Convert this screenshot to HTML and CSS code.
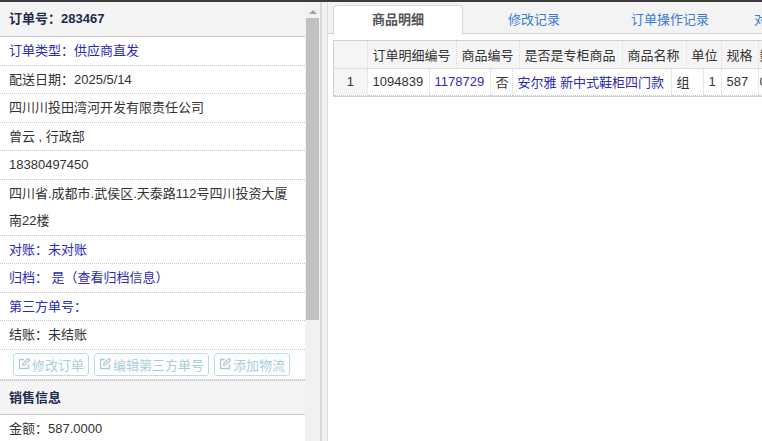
FILE: index.html
```html
<!DOCTYPE html>
<html lang="zh-CN">
<head>
<meta charset="utf-8">
<title>订单详情</title>
<link rel="stylesheet" href="styles.css">
</head>
<body>
<div class="topbar"></div>
<div class="main">
  <aside class="left">
    <div class="sec-head">订单号：283467</div>
    <div class="row blue">订单类型：供应商直发</div>
    <div class="row">配送日期：2025/5/14</div>
    <div class="row">四川川投田湾河开发有限责任公司</div>
    <div class="row">曾云 , 行政部</div>
    <div class="row">18380497450</div>
    <div class="row">四川省.成都市.武侯区.天泰路112号四川投资大厦<br>南22楼</div>
    <div class="row blue">对账：未对账</div>
    <div class="row blue">归档： 是（查看归档信息）</div>
    <div class="row blue">第三方单号：</div>
    <div class="row">结账：未结账</div>
    <div class="row btns">
      <span class="btn"><svg class="ico" viewBox="0 0 14 14"><path d="M7 2.5H2.5v9h9V7" fill="none" stroke="currentColor" stroke-width="1.3"/><path d="M5.5 8.5l.4-2L11 1.4l1.6 1.6-5.1 5.1z" fill="none" stroke="currentColor" stroke-width="1.2" stroke-linejoin="round"/></svg>修改订单</span>
      <span class="btn"><svg class="ico" viewBox="0 0 14 14"><path d="M7 2.5H2.5v9h9V7" fill="none" stroke="currentColor" stroke-width="1.3"/><path d="M5.5 8.5l.4-2L11 1.4l1.6 1.6-5.1 5.1z" fill="none" stroke="currentColor" stroke-width="1.2" stroke-linejoin="round"/></svg>编辑第三方单号</span>
      <span class="btn"><svg class="ico" viewBox="0 0 14 14"><path d="M7 2.5H2.5v9h9V7" fill="none" stroke="currentColor" stroke-width="1.3"/><path d="M5.5 8.5l.4-2L11 1.4l1.6 1.6-5.1 5.1z" fill="none" stroke="currentColor" stroke-width="1.2" stroke-linejoin="round"/></svg>添加物流</span>
    </div>
    <div class="sec-head sec-mid">销售信息</div>
    <div class="row">金额：587.0000</div>
  </aside>
  <div class="vscroll">
    <div class="arrow"></div>
    <div class="thumb"></div>
  </div>
  <div class="divider"></div>
  <section class="right">
    <nav class="tabs">
      <span class="tab active">商品明细</span>
      <span class="tab">修改记录</span>
      <span class="tab">订单操作记录</span>
      <span class="tab">对账结算操作记录</span>
    </nav>
    <div class="grid">
      <table class="ghead">
        <colgroup><col style="width:33px"><col style="width:89px"><col style="width:63px"><col style="width:103px"><col style="width:64px"><col style="width:35px"><col style="width:37px"><col style="width:60px"></colgroup>
        <tr><th class="rn"></th><th>订单明细编号</th><th>商品编号</th><th>是否是专柜商品</th><th>商品名称</th><th>单位</th><th>规格</th><th class="edge">数量</th></tr>
      </table>
      <table class="gbody">
        <colgroup><col style="width:33px"><col style="width:62px"><col style="width:61px"><col style="width:22px"><col style="width:159px"><col style="width:32px"><col style="width:18px"><col style="width:37px"><col style="width:60px"></colgroup>
        <tr><td class="rn">1</td><td>1094839</td><td class="blue">1178729</td><td>否</td><td class="blue">安尔雅 新中式鞋柜四门款</td><td>组</td><td class="num">1</td><td>587</td><td class="edge">0.00</td></tr>
      </table>
    </div>
  </section>
</div>
</body>
</html>
```
FILE: styles.css
```css
* { box-sizing: border-box; }
html, body { margin: 0; padding: 0; }
body {
  width: 762px;
  height: 441px;
  overflow: hidden;
  background: #fff;
  font-family: "Liberation Sans", "Noto Sans CJK SC", sans-serif;
  font-size: 13px;
  color: #333;
}
.topbar { height: 2px; background: #3c3c3c; }
.main { display: flex; height: 439px; }

.left { width: 305px; flex: none; overflow: hidden; background: #fff; }
.sec-head {
  height: 35px;
  line-height: 34px;
  padding-left: 9px;
  background: #f4f4f4;
  border-bottom: 1px solid #c8c8c8;
  font-weight: bold;
  color: #1f2c4f;
}
.sec-mid { border-top: 1px solid #d6d6d6; height: 35px; line-height: 33px; }
.row {
  line-height: 27.5px;
  padding-left: 9px;
  border-bottom: 1px dotted #c4c4c4;
  white-space: nowrap;
}
.blue { color: #2b2bb8; }
.btns {
  display: flex;
  gap: 5px;
  height: 30px;
  padding: 3px 0 0 13px;
  line-height: normal;
}
.btn {
  display: inline-flex;
  align-items: center;
  height: 23px;
  padding: 0 4px 0 3px;
  border: 1px solid #bcdde3;
  border-radius: 3px;
  color: #a7ced8;
}
.ico { width: 14px; height: 14px; margin-right: 1px; }

.vscroll {
  width: 15px;
  flex: none;
  background: #f1f1f1;
  display: flex;
  flex-direction: column;
  align-items: center;
}
.arrow {
  margin-top: 8px;
  width: 0; height: 0;
  border-left: 4px solid transparent;
  border-right: 4px solid transparent;
  border-bottom: 4px solid #a3a3a3;
}
.thumb {
  margin-top: 4px;
  width: 13px;
  height: 302px;
  background: #c1c1c1;
}
.divider {
  width: 7px;
  flex: none;
  background: #f1f1f1;
  border-left: 2px solid #dadada;
}
.right {
  flex: 1;
  min-width: 0;
  overflow: hidden;
  background: #fff;
  border-left: 1px solid #dcdcdc;
}
.tabs {
  display: flex;
  height: 32px;
  padding: 3px 0 0 5px;
  background: #f3f3f3;
  border-bottom: 1px solid #d6d6d6;
  border-top-left-radius: 4px;
  white-space: nowrap;
}
.tab {
  flex: none;
  width: 130px;
  margin-right: 6px;
  height: 29px;
  line-height: 27px;
  text-align: center;
  color: #3a7bd5;
  border: 1px solid transparent;
  border-bottom: 0;
}
.tab.active {
  background: #fff;
  color: #555;
  font-weight: bold;
  border-color: #d6d6d6;
  border-radius: 4px 4px 0 0;
  height: 30px;
}
.grid {
  margin: 6px 0 0 5px;
  width: 486px;
  border: 1px solid #d0d0d0;
  border-right: 0;
}
.grid table {
  border-collapse: collapse;
  table-layout: fixed;
  width: 484px;
}
.grid th, .grid td {
  padding: 0 5px;
  white-space: nowrap;
  overflow: hidden;
  text-align: left;
  font-weight: normal;
}
.ghead th {
  height: 27px;
  background: #f5f5f5;
  border-right: 1px dotted #d2d2d2;
  border-bottom: 1px solid #dedede;
}
.gbody td {
  height: 27px;
  border-right: 1px dotted #d2d2d2;
  border-bottom: 1px dotted #c8c8c8;
}
.grid .rn { background: #f5f5f5; text-align: center; }
.grid .num { text-align: right; padding-right: 5px; }
.grid .edge { padding-left: 1px; }
```
